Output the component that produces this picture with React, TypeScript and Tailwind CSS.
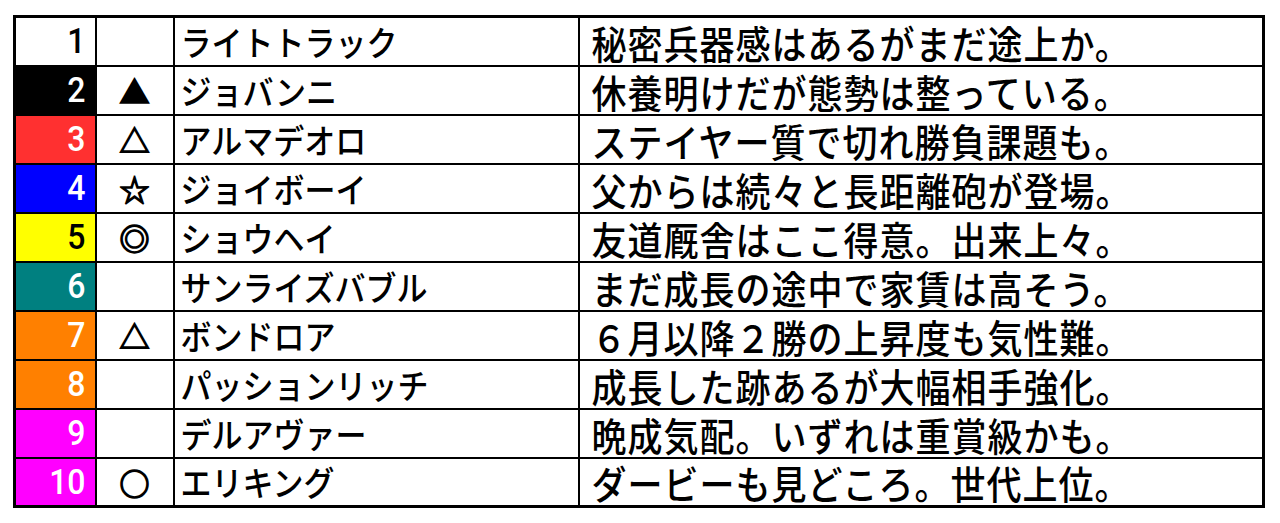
const rows = [
  { no: '1', bg: 'bg-white', fg: 'text-black', mark: '', name: 'ライトトラック', comment: '秘密兵器感はあるがまだ途上か。' },
  { no: '2', bg: 'bg-black', fg: 'text-white', mark: '▲', name: 'ジョバンニ', comment: '休養明けだが態勢は整っている。' },
  { no: '3', bg: 'bg-[#ff3030]', fg: 'text-white', mark: '△', name: 'アルマデオロ', comment: 'ステイヤー質で切れ勝負課題も。' },
  { no: '4', bg: 'bg-[#0000ff]', fg: 'text-white', mark: '☆', name: 'ジョイボーイ', comment: '父からは続々と長距離砲が登場。' },
  { no: '5', bg: 'bg-[#ffff00]', fg: 'text-black', mark: '◎', name: 'ショウヘイ', comment: '友道厩舎はここ得意。出来上々。' },
  { no: '6', bg: 'bg-[#008080]', fg: 'text-white', mark: '', name: 'サンライズバブル', comment: 'まだ成長の途中で家賃は高そう。' },
  { no: '7', bg: 'bg-[#ff8000]', fg: 'text-white', mark: '△', name: 'ボンドロア', comment: '６月以降２勝の上昇度も気性難。' },
  { no: '8', bg: 'bg-[#ff8000]', fg: 'text-white', mark: '', name: 'パッションリッチ', comment: '成長した跡あるが大幅相手強化。' },
  { no: '9', bg: 'bg-[#ff00ff]', fg: 'text-white', mark: '', name: 'デルアヴァー', comment: '晩成気配。いずれは重賞級かも。' },
  { no: '10', bg: 'bg-[#ff00ff]', fg: 'text-white', mark: '○', name: 'エリキング', comment: 'ダービーも見どころ。世代上位。' },
];

export default function App() {
  return (
    <div className="w-[1280px] h-[523px] bg-white pt-[15px] pl-[13px] font-['Noto_Sans_CJK_JP',sans-serif]">
      <table className="w-[1252px] table-fixed border-collapse border-[3px] border-black">
        <colgroup>
          <col className="w-[81px]" />
          <col className="w-[78px]" />
          <col className="w-[405px]" />
          <col />
        </colgroup>
        <tbody>
          {rows.map((r) => (
            <tr key={r.no} className="h-[49px]">
              <td className={`border-2 border-black ${r.bg} ${r.fg} text-right pr-[9px] leading-none`}>
                <span className="inline-block scale-y-[1.1] font-['Roboto',sans-serif] font-medium text-[32px]">{r.no}</span>
              </td>
              <td className="border-2 border-black text-center text-[30px] leading-none [-webkit-text-stroke:1.5px_black]">{r.mark}</td>
              <td className="border-2 border-black pl-[6px] leading-none whitespace-nowrap">
                <span className="inline-block scale-y-[1.1] origin-center text-[31px] font-medium">{r.name}</span>
              </td>
              <td className="border-2 border-black pl-[12px] leading-none whitespace-nowrap">
                <span className="inline-block scale-y-[1.1] origin-center text-[35px] font-medium tracking-[1px]">{r.comment}</span>
              </td>
            </tr>
          ))}
        </tbody>
      </table>
    </div>
  );
}
